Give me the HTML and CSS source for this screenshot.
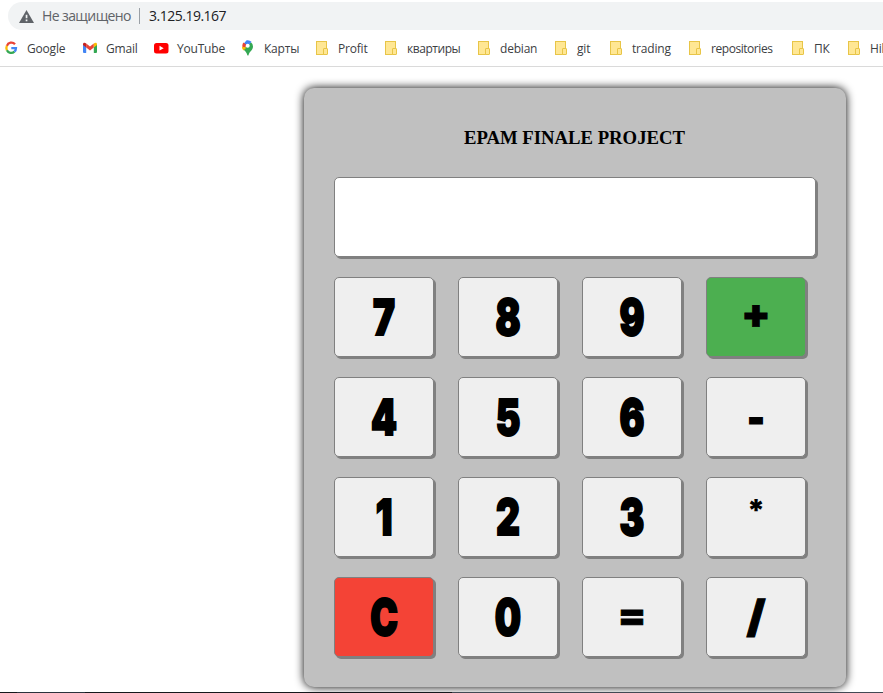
FILE: index.html
```html
<!DOCTYPE html>
<html lang="ru">
<head>
<meta charset="utf-8">
<title>Calculator</title>
<link rel="stylesheet" href="styles.css">
</head>
<body>
<header class="browser">
  <div class="address">
    <svg class="warning" width="15" height="13" viewBox="0 0 15 13"><path d="M7.5 0 15 13H0Z" fill="#5f6368"/><path d="M6.7 4.7h1.7v3.5H6.7zM6.7 9.5h1.7v1.7H6.7z" fill="#f1f3f4"/></svg>
    <span class="status">Не защищено</span>
    <span class="divider"></span>
    <span class="host">3.125.19.167</span>
  </div>
  <nav class="bookmarks">
    <a class="bookmark"><svg class="icon" viewBox="0 0 16 16"><g fill="none" stroke-width="2.3"><path d="M11 4.2A4.8 4.8 0 0 0 2.9 5.8" stroke="#ea4335"/><path d="M2.9 5.8a4.9 4.9 0 0 0 0 4.4" stroke="#fbbc05"/><path d="M2.9 10.2A4.8 4.8 0 0 0 10.4 11.7" stroke="#34a853"/><path d="M7.3 8.1h4.7c0 1.6-.6 2.8-1.6 3.6" stroke="#4285f4"/></g></svg><span>Google</span></a>
    <a class="bookmark"><svg class="icon" viewBox="0 0 16 16"><path d="M0 4.5 3.2 6.5V13H1a1 1 0 0 1-1-1z" fill="#4285f4"/><path d="M10.8 6.5 14 4.5V12a1 1 0 0 1-1 1h-2.2z" fill="#34a853"/><path d="M3.2 3.5 7 6.5l3.8-3v4L7 10.5l-3.8-3z" fill="#ea4335"/><path d="M0 4.2C0 2.7 1.7 2.2 3.2 3.5v4L0 5.1z" fill="#c5221f"/><path d="M14 4.2c0-1.5-1.7-2-3.2-.7v4L14 5.1z" fill="#fbbc04"/></svg><span>Gmail</span></a>
    <a class="bookmark"><svg class="icon" viewBox="0 0 16 16"><rect y="3" width="14.5" height="10.5" rx="2.5" fill="#f00"/><path d="m5.5 5.8 4.2 2.4-4.2 2.4z" fill="#fff"/></svg><span>YouTube</span></a>
    <a class="bookmark"><svg class="icon" viewBox="0 0 16 16"><path d="M2.1 8.7 9.9 2.2A5.5 5.5 0 0 1 12 6.4c0 3.8-3.8 5-4.5 8.8-.1.5-1 .5-1.1 0C5.8 12 3.4 10.8 2.1 8.7Z" fill="#34a853"/><path d="M6.4 6.5 10.5 1.7A5.6 5.6 0 0 0 5.6.3L2 4.5z" fill="#4285f4"/><path d="M2.5 2.4 6 5.3l-3.9 3.4C.9 6.4 1.1 4 2.5 2.4Z" fill="#ea4335"/><path d="m5.5 7.6-3 3C1.7 9.5 1 8.5 1 6.8z" fill="#fbbc04"/><circle cx="6.7" cy="5.8" r="2" fill="#fff"/></svg><span>Карты</span></a>
    <a class="bookmark"><i class="folder"></i><span>Profit</span></a>
    <a class="bookmark"><i class="folder"></i><span class="tight">квартиры</span></a>
    <a class="bookmark"><i class="folder"></i><span>debian</span></a>
    <a class="bookmark"><i class="folder"></i><span>git</span></a>
    <a class="bookmark"><i class="folder"></i><span>trading</span></a>
    <a class="bookmark"><i class="folder"></i><span class="tight">repositories</span></a>
    <a class="bookmark"><i class="folder"></i><span>ПК</span></a>
    <a class="bookmark"><i class="folder"></i><span>Hil</span></a>
  </nav>
</header>
<main class="page">
  <section class="calculator">
    <h3 class="title">EPAM FINALE PROJECT</h3>
    <div class="display"></div>
    <div class="keys">
      <button class="key"><span>7</span></button>
      <button class="key"><span>8</span></button>
      <button class="key"><span>9</span></button>
      <button class="key add"><span>+</span></button>
      <button class="key"><span>4</span></button>
      <button class="key"><span>5</span></button>
      <button class="key"><span>6</span></button>
      <button class="key minus"><span>-</span></button>
      <button class="key"><span>1</span></button>
      <button class="key"><span>2</span></button>
      <button class="key"><span>3</span></button>
      <button class="key times"><span>*</span></button>
      <button class="key clear"><span>C</span></button>
      <button class="key"><span>0</span></button>
      <button class="key equals"><span>=</span></button>
      <button class="key divide"><span>/</span></button>
    </div>
  </section>
</main>
<footer class="taskbar"></footer>
</body>
</html>
```
FILE: styles.css
```css
* { box-sizing: border-box; }
body {
  margin: 0;
  height: 693px;
  overflow: hidden;
  display: flex;
  flex-direction: column;
  background: #fff;
}
.browser {
  flex: none;
  height: 67px;
  padding-top: 2px;
  border-bottom: 1px solid #dadada;
  font-family: "Open Sans", "Noto Sans", sans-serif;
}
.address {
  display: flex;
  align-items: center;
  height: 28px;
  margin-left: 8px;
  padding-left: 11px;
  border-radius: 14px 0 0 14px;
  background: #f1f3f4;
  font-size: 14px;
  line-height: 26px;
  white-space: nowrap;
}
.warning { flex: none; }
.status { width: 97px; margin-left: 8px; color: #5f6368; letter-spacing: -0.6px; }
.divider { width: 1px; height: 16px; background: #9aa0a6; }
.host { margin-left: 9px; color: #202124; letter-spacing: -0.5px; }
.bookmarks {
  display: grid;
  grid-template-columns: 79px 71px 87px 74px 69px 93px 77px 55px 79px 103px 56px 60px;
  height: 36px;
  padding-left: 4px;
  overflow: hidden;
}
.bookmark {
  display: flex;
  align-items: center;
  color: #3c4043;
  font-size: 12px;
  letter-spacing: -0.2px;
  white-space: nowrap;
}
.bookmark .tight { letter-spacing: -0.45px; }
.icon { flex: none; width: 16px; height: 16px; margin-right: 7px; }
.folder {
  position: relative;
  flex: none;
  width: 11px;
  height: 14px;
  margin: 0 11px 0 1px;
  border: 1px solid #e8c547;
  background: #ffe794;
}
.folder::after {
  content: "";
  position: absolute;
  right: -2px;
  bottom: -1px;
  width: 3px;
  height: 5px;
  border: 1px solid #e8c547;
  border-radius: 1px;
  background: #ffe794;
}
.page { flex: 1; min-height: 0; padding: 21px 0 0 304px; overflow: hidden; }
.calculator {
  width: 542px;
  height: 599px;
  padding: 39px 30px 30px;
  border-radius: 10px;
  background: #c0c0c0;
  box-shadow: 0 0 10px #000;
}
.title {
  margin: 0 1px 0 0;
  height: 50px;
  font: bold 18.72px/21px "Liberation Serif", serif;
  text-align: center;
}
.display {
  height: 80px;
  border: 1px solid gray;
  border-radius: 5px;
  background: #fff;
  box-shadow: 2px 2px gray;
}
.keys {
  display: grid;
  grid-template-columns: repeat(4, 100px);
  grid-auto-rows: 80px;
  gap: 20px 24px;
  margin-top: 20px;
}
.key {
  padding: 0;
  border: 1px solid gray;
  border-radius: 5px;
  background: #efefef;
  box-shadow: 2px 2px gray;
  color: #000;
  font: 900 50px/78px Inter, sans-serif;
}
.key span {
  display: block;
  transform: scaleX(0.74);
  -webkit-text-stroke: 2px #000;
}
.key.add { background: #4caf50; font-size: 40px; }
.key.clear { background: #f44336; }
.key.times { font-size: 30px; }
.key.equals { font-size: 36px; }
.key.divide { font-size: 44px; }
.add span { transform: translateY(-3px) scaleX(1.06); -webkit-text-stroke: 0.8px #000; }
.minus span { transform: scaleX(0.82); -webkit-text-stroke: 0; }
.times span { transform: translateY(-7px) scaleX(1.02); -webkit-text-stroke: 0; }
.equals span { transform: translateY(-2px) scaleX(1.14); -webkit-text-stroke: 0.8px #000; }
.divide span { transform: translateY(-1px) scaleX(1.05); -webkit-text-stroke: 1px #000; }
.taskbar {
  flex: none;
  height: 1px;
  background: linear-gradient(90deg, #15181c 0 17px, #2b333d 17px 85px, #15181c 85px 452px, #424954 452px);
}
```
